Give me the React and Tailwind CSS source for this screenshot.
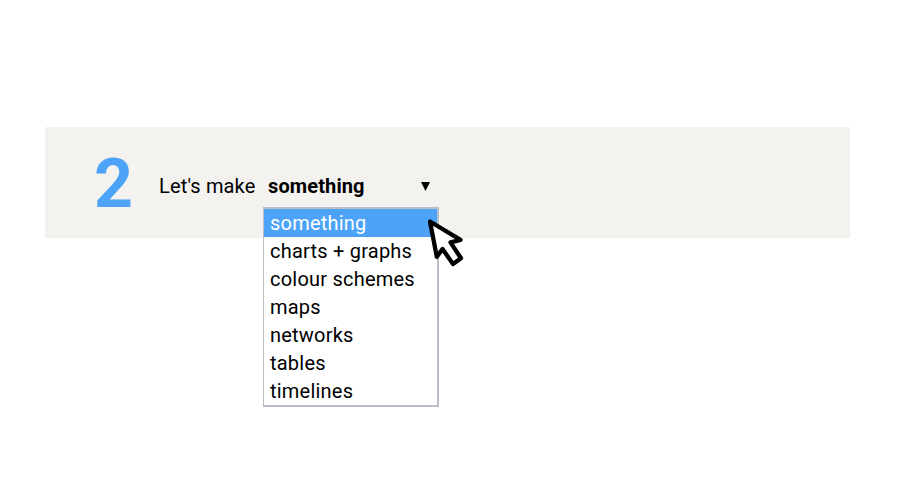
import { useState } from 'react';

const OPTIONS = [
  'something',
  'charts + graphs',
  'colour schemes',
  'maps',
  'networks',
  'tables',
  'timelines',
];

const Pointer = () => (
  <svg
    className="pointer-events-none absolute left-[160px] top-[4px]"
    width="44"
    height="58"
    viewBox="0 0 44 58"
    aria-hidden="true"
  >
    <path
      d="M6 8.5L36.5 26.8L26.5 29.4L37 45.2L29 51L18.5 36L12.8 43.8Z"
      fill="#fff"
      stroke="#000"
      strokeWidth="4.3"
      strokeLinejoin="round"
    />
  </svg>
);

const OptionList = ({ selected, onSelect }) => (
  <div className="absolute -left-[5px] top-[35px] w-44 border-2 border-l border-[#b9bec8] bg-white">
    <ul>
      {OPTIONS.map((option) => (
        <li
          key={option}
          onClick={() => onSelect(option)}
          className={
            option === selected
              ? 'h-7 bg-[#4da3f7] pl-[6px] leading-7 text-white'
              : 'h-7 pl-[6px] leading-7'
          }
        >
          {option}
        </li>
      ))}
    </ul>
    <Pointer />
  </div>
);

export default function App() {
  const [selected, setSelected] = useState('something');

  return (
    <div className="h-[500px] w-[897px] overflow-hidden bg-white pl-[45px] pt-[127px] font-['Roboto',sans-serif] text-[20px] tracking-[0.22px] text-black">
      <section className="flex h-[111px] w-[805px] items-center bg-[#f3f2ee] pl-[49px]">
        <span className="w-[65px] pt-[2px] text-[68px] font-bold leading-none tracking-normal text-[#4da3f7]">
          2
        </span>
        <span className="w-[109px] pt-[6px] leading-7 tracking-[0.16px]">Let's make</span>
        <div className="relative mt-[6px] flex h-7 w-[162px] items-center justify-between">
          <span className="font-bold leading-7 tracking-[0.12px]">{selected}</span>
          <svg className="mt-px" width="9" height="9" viewBox="0 0 9 9" aria-hidden="true">
            <path d="M0 0H9L4.5 9Z" />
          </svg>
          <OptionList selected={selected} onSelect={setSelected} />
        </div>
      </section>
    </div>
  );
}
